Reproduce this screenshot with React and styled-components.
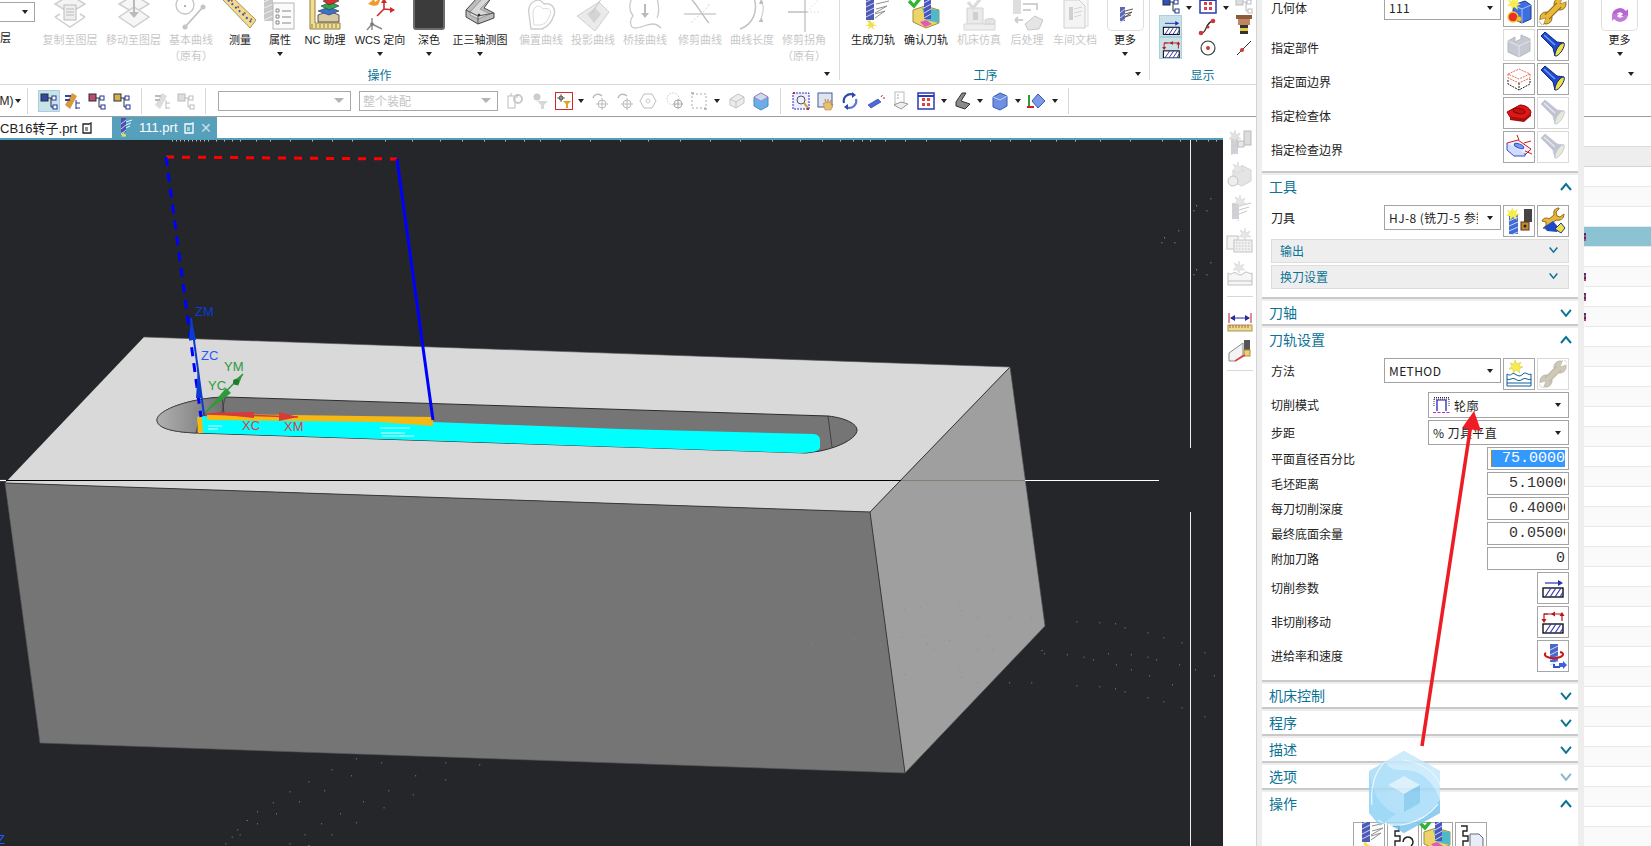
import styled, { createGlobalStyle } from 'styled-components';

const GlobalStyle = createGlobalStyle`
  html, body { margin: 0; padding: 0; width: 100%; height: 100%; overflow: hidden; background: #fff; }
  #root { width: 100%; height: 100%; }
  * { box-sizing: border-box; }
  body { font-family: "Liberation Sans", "Noto Sans CJK SC", sans-serif; font-size: 12px; color: #222; }
  svg { display: block; flex: none; }
`;

/* ---------- ribbon drawings ---------- */
const Ico = ({ w = 36, h = 32, children }) => (
  <svg width={w} height={h} viewBox={`0 0 ${w} ${h}`} fill="none">{children}</svg>
);
const G = '#cfcfcf';

const CopyLayer = () => (
  <Ico>
    <path d="M18-5 33 4 18 13 3 4Z" fill="#f3f3f3" stroke={G} strokeWidth="1.5" />
    <path d="M3 17 18 27 33 17M3 17l5-3M33 17l-5-3" stroke={G} strokeWidth="1.5" />
    <rect x="12" y="5" width="12" height="15" fill="#eee" stroke="#bbb" />
    <path d="M14 9h8M14 12h8M14 15h8" stroke="#bbb" />
  </Ico>
);
const MoveLayer = () => (
  <Ico>
    <path d="M18-5 33 4 18 13 3 4Z" fill="#f6f6f6" stroke={G} strokeWidth="1.5" />
    <path d="M3 17 18 27 33 17 18 7Z" fill="#f6f6f6" stroke={G} strokeWidth="1.5" />
    <path d="M18 0v14" stroke="#bbb" strokeWidth="2" />
    <path d="M13 12h10l-5 6Z" fill="#bbb" />
  </Ico>
);
const BasicCurve = () => (
  <Ico>
    <circle cx="12" cy="5" r="9" stroke="#c4c4c4" strokeWidth="1.3" />
    <circle cx="12" cy="6" r="1" fill="#999" />
    <path d="M12 27 30 7" stroke="#bdbdbd" strokeWidth="1.6" />
    <circle cx="12" cy="27" r="2.5" fill="#c4c4c4" />
    <circle cx="30" cy="7" r="2.5" fill="#c4c4c4" />
  </Ico>
);
const Measure = () => (
  <Ico>
    <path d="M7-6 34 20 28 28 1 0Z" fill="#f0dc8e" stroke="#a6975c" />
    <path d="M6 0 29 22" stroke="#3c52c0" strokeWidth="2" strokeDasharray="2 3" />
    <path d="M9 0 30 20" stroke="#d04040" strokeWidth="1.5" strokeDasharray="2 7" />
  </Ico>
);
const Props = () => (
  <Ico>
    <rect x="2" y="-3" width="9" height="24" fill="#c9c9c9" />
    <path d="M2 2l9-4M2 8l9-4M2 14l9-4M2 20l9-4" stroke="#eee" />
    <rect x="11" y="3" width="21" height="26" fill="#fbfbfb" stroke="#b5b5b5" />
    <path d="M14 9h3v3h-3zM14 15h3v3h-3zM14 21h3v3h-3z" stroke="#888" />
    <path d="M20 11h9M20 17h9M20 23h9" stroke="#888" />
  </Ico>
);
const NcHelper = () => (
  <Ico>
    <path d="M3-3H8V23H33V29H3Z" fill="#f3dd8f" stroke="#8e7e3e" />
    <path d="M5 24v4M9 24v4M13 24v4M17 24v4M21 24v4M25 24v4M29 24v4" stroke="#6f6a4a" strokeWidth=".8" />
    <path d="M11 22V15L22 11 32 15V22Z" fill="#d8c9a0" stroke="#555" />
    <path d="M11 11 22 7l10 4-10 4Z" fill="#3a70d8" stroke="#234" strokeWidth=".6" />
    <path d="M14 6 24 2l8 4-10 4Z" fill="#2fa84a" stroke="#234" strokeWidth=".6" />
    <path d="M16 1 26-3l6 4-10 4Z" fill="#d83030" stroke="#234" strokeWidth=".6" />
  </Ico>
);
const WcsOrient = () => (
  <Ico>
    <path d="M10 30V18M10 24l-5 6M10 24l10 5" stroke="#8a8a8a" strokeWidth="1.4" />
    <circle cx="10" cy="24" r="1.8" fill="#777" />
    <path d="M22 9V-2M22 9l10 1M22 9l-7 7" stroke="#d02c2c" strokeWidth="1.6" />
    <path d="M22-2l-3 5h6Z M33 10l-5-3v6Z" fill="#d02c2c" />
    <path d="M6 4 12-1l1 3 6-4-3 7-4 1Z" fill="#f09a2a" />
  </Ico>
);
const DarkMode = () => (
  <Ico>
    <rect x="3" y="-4" width="30" height="33" rx="2" fill="#3b3b3b" stroke="#6c6c6c" strokeWidth="2" />
  </Ico>
);
const Trimetric = () => (
  <Ico>
    <path d="M4 10 16-3H30L22 8 32 13V18L16 24 4 17Z" fill="#bcbcbc" stroke="#444" />
    <path d="M8 12 20-1H28L18 9 28 14 16 19 8 15Z" fill="#d8d8d8" stroke="#777" strokeWidth=".6" />
    <path d="M4 10 16 16 32 13M16 16V24" stroke="#555" />
    <circle cx="17" cy="15" r="1.300" fill="#333" />
  </Ico>
);
const OffsetCurve = () => (
  <Ico>
    <path d="M6 14C4 2 16-4 21 4 29 2 33 9 31 15 29 22 24 27 19 29H8Z" stroke="#cdcdcd" strokeWidth="1.4" />
    <path d="M10 15C9 7 16 3 20 9 26 7 29 11 27 15 25 20 22 24 18 25H11Z" stroke="#dadada" />
  </Ico>
);
const ProjectCurve = () => (
  <Ico>
    <path d="M2 16 24 2l10 10-14 19Z" fill="#eaeaea" stroke="#d0d0d0" />
    <path d="M12 14l8-6 6 6-7 9Z" fill="#d4d4d4" />
    <path d="M22-2h12" stroke="#bbb" strokeWidth="3" />
    <path d="M27-2 16 14" stroke="#c4c4c4" />
  </Ico>
);
const BridgeCurve = () => (
  <Ico>
    <path d="M5-2C1 6 3 12 6 16 2 20 3 28 8 28 14 28 20 24 26 24 30 24 33 27 34 28M30-2C32 6 33 12 30 18" stroke="#c9c9c9" strokeWidth="1.3" />
    <path d="M18 4v10" stroke="#bbb" strokeWidth="2" />
    <path d="M14 13h8l-4 5Z" fill="#bbb" />
  </Ico>
);
const TrimCurve = () => (
  <Ico>
    <path d="M2 14H34" stroke="#c4c4c4" strokeWidth="1.3" />
    <path d="M10 0C16 6 22 18 27 23" stroke="#bbb" strokeWidth="1.3" />
    <path d="M27 4C22 14 14 16 8 24" stroke="#d4d4d4" strokeDasharray="2 2" />
  </Ico>
);
const CurveLength = () => (
  <Ico>
    <path d="M20-2C24 10 20 24 6 29" stroke="#c4c4c4" strokeWidth="1.5" />
    <path d="M27-2C31 8 29 16 25 22" stroke="#c4c4c4" />
    <path d="M27-1l-2 5h4ZM25 22l3-4 1 4Z" fill="#bbb" />
  </Ico>
);
const TrimCorner = () => (
  <Ico>
    <path d="M2 12H21M19 0V32" stroke="#bfbfbf" strokeWidth="1.3" />
    <path d="M21 12H34M21 12 32 0" stroke="#d8d8d8" strokeDasharray="1.5 2" />
  </Ico>
);
const Cutter = ({ x = 12, y = -4, w = 8, h = 24, c = '#4f5ab4' }) => (
  <g>
    <rect x={x} y={y} width={w} height={h} fill={c} />
    <path d={`M${x} ${y + 6}l${w} -4M${x} ${y + 11}l${w} -4M${x} ${y + 16}l${w} -4M${x} ${y + 21}l${w} -4`} stroke="#cfd4f2" strokeWidth="1" />
  </g>
);
const GenPath = () => (
  <Ico>
    <Cutter x={11} y={-4} />
    <path d="M21 4 34 1M21 9 32 6 20 13M20 14 30 11 20 18" stroke="#8f8f8f" strokeWidth="1" />
    <path d="M15 20l2 3 3-2-2 3 4 2-4 0 1 4-3-3-3 3 1-4-4 0 4-2-2-3Z" fill="#f1e04c" />
  </Ico>
);
const VerifyPath = () => (
  <Ico>
    <path d="M5 22V10L17 6l14 4v13l-13 5Z" fill="#ecd36a" stroke="#a38f3e" />
    <path d="M14 8 31 10v13L18 20Z" fill="#4fb9c8" />
    <path d="M12 22 18 20 24 24 17 27Z" fill="#e05cb0" />
    <Cutter x={16} y={-3} w={7} h={22} c="#4757bf" />
    <path d="M1 1 6 6 14-4" stroke="#2fb52f" strokeWidth="3.4" />
  </Ico>
);
const MachineSim = () => (
  <Ico>
    <path d="M6 8H22V24H6Z" fill="#eaeaea" stroke="#d2d2d2" />
    <path d="M3 24H34V30H3Z" fill="#eee" stroke="#d8d8d8" />
    <path d="M24 20c4-2 8-2 10 0v4H24Z" fill="#e3e3e3" stroke="#d2d2d2" />
    <path d="M12 12h5v8h-5z" fill="#cfcfcf" />
    <path d="M7 2l5 6 9-11" stroke="#dcdcdc" strokeWidth="3.2" />
  </Ico>
);
const PostProc = () => (
  <Ico>
    <rect x="4" y="-4" width="8" height="18" fill="#dedede" />
    <path d="M14 4H28V10M14 10h8" stroke="#d0d0d0" strokeWidth="2" />
    <path d="M6 20H14M6 20l3-3M6 20l3 3" stroke="#cfcfcf" strokeWidth="2" />
    <path d="M16 24 26 16l8 4-4 9-11 1Z" fill="#e5e5e5" stroke="#c8c8c8" />
  </Ico>
);
const ShopDoc = () => (
  <Ico>
    <rect x="13" y="-4" width="18" height="30" fill="#f8f8f8" stroke="#dcdcdc" />
    <path d="M7 0H22L28 6V28H7Z" fill="#f4f4f4" stroke="#cfcfcf" />
    <rect x="12" y="7" width="4" height="13" fill="#d0d0d0" />
    <path d="M17 9 25 7M17 13 25 11M17 17 24 15" stroke="#d4d4d4" />
  </Ico>
);
const MoreTool = () => (
  <Ico w={18} h={18} >
    <Cutter x={4} y={1} w={5} h={14} c="#5b67b4" />
    <path d="M9 5 17 3M9 8 16 6 9 11M9 11 15 9" stroke="#555" />
  </Ico>
);
const MoreSpin = () => (
  <Ico w={22} h={20}>
    <path d="M3 10a8 8 0 0 1 14-4l2-2v7h-7l2-2a4 4 0 0 0-7 1Z" fill="#b866cf" />
    <path d="M19 10a8 8 0 0 1-14 4l-2 2V9h7l-2 2a4 4 0 0 0 7-1Z" fill="#c47ad8" />
  </Ico>
);

/* ---------- hatch and panel drawings ---------- */
const Hatch = ({ y = 12, w = 20 }) => (
  <g>
    <rect x="3" y={y} width={w} height="9" fill="#fff" stroke="#000" strokeWidth="1.3" />
    <path d={`M5 ${y + 9}l6-9M10 ${y + 9}l6-9M15 ${y + 9}l6-9M20 ${y + 9}l3-5`} stroke="#3236a8" strokeWidth="1.2" />
  </g>
);
const CutParams = ({ w = 26, h = 26 }) => (
  <Ico w={w} h={h}>
    <path d="M5 8H20" stroke="#2430b0" strokeWidth="1.2" />
    <path d="M23 8l-5-3v6Z" fill="#2430b0" />
    <Hatch y={13} />
  </Ico>
);
const NonCut = ({ w = 26, h = 26 }) => (
  <Ico w={w} h={h}>
    <path d="M4 12V5H22V12" stroke="#b8141c" strokeWidth="1.2" />
    <path d="M4 5h4" stroke="#b8141c" />
    <path d="M11 5l4-2.5v5ZM1.5 10h5L4 14ZM19.500 7h5L22 3Z" fill="#b8141c" />
    <Hatch y={15} />
  </Ico>
);
const GeomNew = () => (
  <Ico w={28} h={28}>
    <path d="M8 8 20 4l6 4v14l-9 4-9-4Z" fill="#3d6fe0" stroke="#1c3c90" />
    <path d="M8 8l9 4 9-4M17 12v14" stroke="#a8c4ff" />
    <circle cx="8" cy="20" r="5" fill="#e9302a" stroke="#f2c82e" strokeWidth="1.3" />
    <circle cx="14" cy="22" r="2.5" fill="#f2c82e" stroke="#c82" strokeWidth=".6" />
    <path d="M8 0l2 4 4-2-2 4 4 1-4 2 1 4-4-3-2 3-1-4-4 0 3-3-2-3 4 1Z" fill="#f5ec50" />
  </Ico>
);
const Wrench = ({ a = '#e9b83a', b = '#8a6b1a' }) => (
  <Ico w={28} h={28}>
    <circle cx="21" cy="7" r="6" fill={a} stroke={b} />
    <circle cx="7" cy="21" r="6" fill={a} stroke={b} />
    <path d="M8 20 20 8" stroke={b} strokeWidth="7" />
    <path d="M7 21 21 7" stroke={a} strokeWidth="5" />
    <path d="M21 7 24-1 30 4Z" fill="#fff" stroke={b} strokeWidth=".6" />
    <path d="M7 21-1 23 4 29Z" fill="#fff" stroke={b} strokeWidth=".6" />
  </Ico>
);
const ToolWrench = () => (
  <Ico w={28} h={28}>
    <path d="M20 1c-4 0-6 3-5 7L10 12c-2-2-6-1-7 2l4 1 0 4-3 2c3 2 7 0 7-3L17 13c4 1 8-1 8-6l-4 3-3-1-1-4 3-3Z" fill="#e9b83a" stroke="#8a6b1a" />
    <path d="M5 20 14 14l6 7-2 4-10-1Z" fill="#1e49c8" />
    <path d="M16 22l6-6 4 5-4 5Z" fill="#f0e040" stroke="#1e3a90" />
  </Ico>
);
const Block = () => (
  <Ico w={28} h={28}>
    <path d="M3 10 10 6v5l6-3v-4l9 4v12l-11 6-11-5Z" fill="#c6c9d2" stroke="#b4b7c0" />
    <path d="M3 10l11 5 11-5M14 15v11" stroke="#e2e4ea" />
  </Ico>
);
const Flash = ({ on = true }) => (
  <Ico w={28} h={28}>
    <path d="M2 5 6 1 18 11 25 12 16 25 14 17Z" fill={on ? '#1e49c8' : '#bfc3d2'} stroke={on ? '#0f2780' : '#c8cad6'} />
    <path d="M5 4 16 14" stroke={on ? '#6f9cff' : '#e6e8f0'} strokeWidth="1.5" />
    <path d="M25 12c2 3-5 14-9 13-1-4 5-14 9-13Z" fill={on ? '#f0e040' : '#e9e9d8'} stroke={on ? '#0f2780' : '#c8cad6'} />
  </Ico>
);
const WireBox = () => (
  <Ico w={28} h={28}>
    <path d="M3 9 14 4l11 5-11 5ZM3 9v4l11 5 11-5V9" stroke="#ef6a5a" strokeDasharray="2 1" />
    <path d="M3 15v4l11 6 11-6v-5M14 18v7" stroke="#222" strokeDasharray="2 1" />
  </Ico>
);
const RedBlock = () => (
  <Ico w={28} h={28}>
    <path d="M2 13 15 6c6 0 11 4 11 8l-7 6-14-2Z" fill="#e01616" stroke="#8a0808" />
    <ellipse cx="14" cy="12" rx="6" ry="2.5" transform="rotate(12 14 12)" stroke="#7a0606" fill="#c81010" />
    <path d="M5 18 19 20 26 14v3l-7 6-14-2Z" fill="#a80e0e" />
  </Ico>
);
const Boat = () => (
  <Ico w={28} h={28}>
    <path d="M2 10 13 7l13 9-6 6H9Z" fill="#eaf0ff" stroke="#d81818" />
    <ellipse cx="14" cy="13" rx="5" ry="2" transform="rotate(22 14 13)" fill="#7c98f0" stroke="#3050c0" />
    <path d="M2 10v7l7 6h11v-3" fill="#cfdcff" stroke="#3050c0" />
    <path d="M12 2l2 5M19 10l7-2M20 18l7 3" stroke="#d81818" />
  </Ico>
);
const ToolNew = () => (
  <Ico w={28} h={28}>
    <rect x="19" y="2" width="8" height="13" fill="#444" />
    <rect x="16" y="15" width="8" height="8" fill="#c98a22" stroke="#533" />
    <circle cx="20" cy="19" r="1.5" fill="#222" />
    <Cutter x={4} y={8} w={9} h={19} c="#3e6dd8" />
    <path d="M7 0l2 4 4-2-2 4 4 1-4 2 1 4-4-3-3 3 0-4-4 0 3-3-2-3 4 1Z" fill="#f5ec50" />
  </Ico>
);
const Waves = () => (
  <Ico w={28} h={28}>
    <path d="M2 14c4 3 5-2 8 0s5 3 8 0 5 2 8 0v12H2Z" fill="#fff" stroke="#0e5c9a" />
    <path d="M2 19c3 2 5-2 8 0s5 2 8 0 5 2 8 0M2 23h24" stroke="#0e5c9a" />
    <path d="M10 0l2 4 4-2-2 4 4 1-4 2 1 4-4-3-3 3 0-4-4 0 3-3-2-3 4 1Z" fill="#f5ec50" stroke="#c9b620" strokeWidth=".4" />
  </Ico>
);
const Feeds = () => (
  <Ico w={28} h={28}>
    <Cutter x={11} y={2} w={8} h={18} c="#4a68c8" />
    <path d="M7 11c-4 2 2 6 10 5s9-5 4-6" stroke="#c81818" strokeWidth="2" />
    <path d="M15 22v3h6" stroke="#3050d0" strokeWidth="2" />
    <path d="M20 21h4v-2l4 4-4 4v-2h-4Z" fill="#3f5fe0" />
  </Ico>
);
const Squiggle = ({ over }) => (
  <Ico w={28} h={28}>
    <path d="M4 2h6v5H6v5h5v5H6v5" stroke="#222" strokeWidth="1.4" />
    {over}
  </Ico>
);
const ProfileMode = () => (
  <svg width="17" height="18" viewBox="0 0 17 18" fill="none">
    <path d="M1 3H16M1 1.500h15M1 3v8M16 3v8" stroke="#333" strokeDasharray="1 1" />
    <path d="M4 15V4H13V15" stroke="#1414b8" strokeWidth="1.2" />
    <path d="M0 16.500H17" stroke="#d020d0" strokeDasharray="3 1.500" />
  </svg>
);

/* ---------- toolbar drawings ---------- */
const Tree = ({ c = '#3346a8', k = '#233', off }) => (
  <Ico w={20} h={20}>
    <rect x="2" y="3" width="7" height="7" fill={off ? '#ddd' : c} stroke={off ? '#bbb' : k} />
    <path d="M9 7h5M12 7v9h3" stroke={off ? '#bbb' : k} />
    <rect x="13" y="5" width="4" height="4" fill="#fff" stroke={off ? '#bbb' : '#23309a'} />
    <rect x="14" y="14" width="4" height="4" fill="#fff" stroke={off ? '#bbb' : '#23309a'} />
  </Ico>
);
const Asm = ({ off }) => (
  <Ico w={20} h={20}>
    <path d="M3 14 10 2l5 3-7 13Z" fill={off ? '#ddd' : '#d89a3a'} />
    <path d="M3 5h6M3 9h5" stroke={off ? '#bbb' : '#3346a8'} strokeWidth="2" />
    <path d="M14 9v9M14 12h4M14 17h4" stroke={off ? '#bbb' : '#23309a'} />
  </Ico>
);
const GreyGear = () => (
  <Ico w={20} h={20}>
    <rect x="3" y="5" width="7" height="12" stroke="#bdbdbd" />
    <circle cx="13" cy="8" r="4" stroke="#c9c9c9" strokeWidth="2" />
    <path d="M12 3v4M6 2v3" stroke="#bbb" />
  </Ico>
);
const GreyFilter = () => (
  <Ico w={20} h={20}>
    <circle cx="7" cy="6" r="3.500" fill="#ccc" />
    <path d="M7 10h11l-4 4v4h-3v-4Z" fill="#d8d8d8" />
  </Ico>
);
const SnapFilter = () => (
  <Ico w={20} h={20}>
    <rect x="1.500" y="1.500" width="17" height="17" stroke="#d8232a" />
    <circle cx="7" cy="7" r="2" stroke="#444" />
    <path d="M7 3v8M3 7h8" stroke="#444" strokeWidth=".7" />
    <path d="M9 10h8l-3 3v4h-2v-4Z" fill="#e8a020" />
  </Ico>
);
const GreyCross = () => (
  <Ico w={20} h={20}>
    <path d="M3 7c1-4 6-5 9-2" stroke="#bbb" strokeWidth="1.5" />
    <circle cx="12" cy="13" r="4" stroke="#bbb" />
    <path d="M12 7v12M6 13h12" stroke="#bbb" />
  </Ico>
);
const GreyHex = () => (
  <Ico w={20} h={20}>
    <path d="M6 3H14L18 10 14 17H6L2 10Z" stroke="#bdbdbd" />
    <circle cx="10" cy="10" r="2" stroke="#c9c9c9" />
  </Ico>
);
const GreyDots = () => (
  <Ico w={20} h={20}>
    <circle cx="8" cy="8" r="6" stroke="#c4c4c4" strokeDasharray="1.500 1.500" />
    <circle cx="13" cy="13" r="4" stroke="#aaa" />
    <path d="M13 8v10M8 13h10" stroke="#aaa" />
  </Ico>
);
const GreySel = () => (
  <Ico w={20} h={20}>
    <rect x="3" y="3" width="14" height="14" stroke="#aaa" strokeDasharray="2 2" />
    <path d="M2 2h3M15 18h3" stroke="#888" />
  </Ico>
);
const GreyCube = () => (
  <Ico w={20} h={20}>
    <path d="M3 8 11 3l6 3v6l-8 5-6-3Z" fill="#ececec" stroke="#c4c4c4" />
    <path d="M3 8l6 3 8-5M9 11v6" stroke="#c4c4c4" />
  </Ico>
);
const BlueCube = () => (
  <Ico w={20} h={20}>
    <path d="M3 6 10 2l7 4v9l-7 4-7-4Z" fill="#69aee8" stroke="#4e88c0" />
    <path d="M3 6l7 4 7-4-7-4Z" fill="#c6dcf4" stroke="#d85a8a" strokeWidth=".6" />
  </Ico>
);
const ZoomFit = () => (
  <Ico w={20} h={20}>
    <rect x="2" y="2" width="16" height="16" fill="#eef" stroke="#2a2ad8" strokeDasharray="2 1" />
    <circle cx="10" cy="9" r="4" stroke="#555" />
    <path d="M13 12l4 5" stroke="#c8a020" strokeWidth="2" />
    <path d="M2 2h2M16 18h2" stroke="#d82020" strokeWidth="2" />
  </Ico>
);
const PanHand = () => (
  <Ico w={20} h={20}>
    <rect x="2" y="2" width="14" height="14" fill="#dfe4f2" stroke="#4a5a9a" />
    <path d="M9 19l-2-7 2 1 0-5 2 4 1-4 1 4 2-3 0 5 2-1-2 6Z" fill="#e8c070" stroke="#a87c2a" strokeWidth=".5" />
  </Ico>
);
const Orbit = () => (
  <Ico w={20} h={20}>
    <path d="M4 12A7 7 0 0 1 13 3.500" stroke="#2a4aa8" strokeWidth="2.200" />
    <path d="M16 8A7 7 0 0 1 7 16.500" stroke="#5a78d0" strokeWidth="2.200" />
    <path d="M12 1l4 3-4 3ZM8 13l-4 3 4 3Z" fill="#2a4aa8" />
  </Ico>
);
const Prism = () => (
  <Ico w={20} h={20}>
    <path d="M2 14 12 8l3 3-10 6Z" fill="#4a6ad8" stroke="#2a3a90" strokeWidth=".6" />
    <path d="M15 6l1.500-2M17 7h2" stroke="#d02020" />
  </Ico>
);
const Layout2 = () => (
  <Ico w={20} h={20}>
    <rect x="4" y="1" width="9" height="12" fill="#fff" stroke="#bbb" />
    <path d="M6 4h2M6 7h2" stroke="#aaa" />
    <path d="M3 14l7-3 7 2-7 5Z" fill="#eee" stroke="#999" />
  </Ico>
);
const Views = () => (
  <Ico w={20} h={20}>
    <rect x="2" y="2" width="16" height="16" fill="#fff" stroke="#2a3ab0" strokeWidth="1.5" />
    <path d="M2 5h16" stroke="#2a3ab0" strokeWidth="2" />
    <path d="M6 7h3v3H6zM11 7h3v3h-3zM6 12h3v3H6zM11 12h3v3h-3z" fill="#e04040" />
  </Ico>
);
const Shade = () => (
  <Ico w={20} h={20}>
    <path d="M3 11 9 2h4L8 10l9 3-5 5-9-3Z" fill="#8a8a8a" stroke="#333" />
  </Ico>
);
const Shade2 = () => (
  <Ico w={20} h={20}>
    <path d="M3 6 10 2l7 3v10l-7 4-7-3Z" fill="#6f8fe0" stroke="#3a5ab0" />
    <path d="M3 6l7 3 7-4" stroke="#c4d4ff" />
  </Ico>
);
const Diamond = () => (
  <Ico w={20} h={20}>
    <path d="M3 4v12" stroke="#2aa02a" strokeWidth="2" />
    <path d="M1 16h7" stroke="#d02020" strokeWidth="2" />
    <path d="M6 10l6-7 7 7-7 7Z" fill="#7d9ae8" stroke="#3a5ab0" />
  </Ico>
);
const DocIcon = ({ c = '#222' }) => (
  <svg width="10" height="12" viewBox="0 0 10 12" fill="none">
    <path d="M1 2h6l2-1v10H1Z" stroke={c} strokeWidth="1.300" />
    <path d="M3 6h3M3 8h3" stroke={c} />
  </svg>
);

/* ---------- side strip drawings ---------- */
const StripTool = () => (
  <Ico w={26} h={26}>
    <Cutter x={4} y={10} w={7} h={15} c="#cfcfcf" />
    <rect x="17" y="2" width="7" height="14" fill="#dcdcdc" stroke="#bbb" />
    <path d="M11 12h6v6h-6z" fill="#e8e8e8" stroke="#bbb" />
    <path d="M8 1l1 5 4-2-2 4 3 2-5 0-1 3-2-3-4 0 3-3-2-4 4 2Z" fill="#e2e2e2" stroke="#ccc" strokeWidth=".5" />
  </Ico>
);
const StripBlock = () => (
  <Ico w={26} h={26}>
    <path d="M6 9 16 4l8 4v11l-9 5-9-4Z" fill="#e4e4e4" stroke="#d4d4d4" />
    <circle cx="6" cy="19" r="5" fill="#eee" stroke="#c4c4c4" />
    <path d="M11 0l1 5 4-2-2 4 3 2-5 0-1 3-2-3-4 0 3-3-2-4 4 2Z" fill="#e6e6e6" stroke="#d0d0d0" strokeWidth=".5" />
  </Ico>
);
const StripGen = () => (
  <Ico w={26} h={26}>
    <Cutter x={5} y={8} w={7} h={16} c="#d0d0d0" />
    <path d="M12 11 24 8M12 15 22 12M12 19 20 16" stroke="#c8c8c8" />
    <path d="M13 0l1 5 4-2-2 4 3 2-5 0-1 3-2-3-4 0 3-3-2-4 4 2Z" fill="#e6e6e6" stroke="#d0d0d0" strokeWidth=".5" />
  </Ico>
);
const StripGrid = () => (
  <Ico w={28} h={26}>
    <rect x="1" y="8" width="11" height="13" fill="#f4f4f4" stroke="#c4c4c4" />
    <rect x="8" y="12" width="18" height="12" fill="#f0f0f0" stroke="#c4c4c4" />
    <path d="M10 15h14M10 18h14M10 21h14" stroke="#c4c4c4" strokeDasharray="1.500 1.500" />
    <path d="M19 0l1 5 4-2-2 4 3 2-5 0-1 3-2-3-4 0 3-3-2-4 4 2Z" fill="#e6e6e6" stroke="#d0d0d0" strokeWidth=".5" />
  </Ico>
);
const StripWaves = () => (
  <Ico w={28} h={26}>
    <path d="M2 12c4 3 5-2 8 0s5 3 8 0 5 2 8 0v12H2Z" fill="#f6f6f6" stroke="#c0c0c0" />
    <path d="M2 20h24" stroke="#c0c0c0" />
    <path d="M13 0l1 5 4-2-2 4 3 2-5 0-1 3-2-3-4 0 3-3-2-4 4 2Z" fill="#e6e6e6" stroke="#d0d0d0" strokeWidth=".5" />
  </Ico>
);
const StripRuler = () => (
  <Ico w={26} h={22}>
    <path d="M2 2v10M24 2v10" stroke="#c81818" />
    <path d="M4 7H22" stroke="#2a2a9a" />
    <path d="M3 7l5-3v6ZM23 7l-5-3v6Z" fill="#2a2a9a" />
    <rect x="1" y="14" width="24" height="6" fill="#ecd98c" stroke="#a89860" />
    <path d="M3 14v3M6 14v3M9 14v3M12 14v3M15 14v3M18 14v3M21 14v3" stroke="#a03030" strokeWidth=".7" />
  </Ico>
);
const StripWedge = () => (
  <Ico w={26} h={24}>
    <path d="M2 14 16 4V16L8 22H2Z" fill="#f3f3f3" stroke="#8a8a8a" />
    <rect x="17" y="1" width="6" height="11" fill="#555" />
    <rect x="17" y="11" width="6" height="6" fill="#ecd070" stroke="#a89040" />
    <path d="M8 22 18 16" stroke="#e04040" strokeWidth="1.500" />
  </Ico>
);

/* ---------- display group drawings ---------- */
const SCurve = () => (
  <Ico w={24} h={22}>
    <path d="M5 18C11 19 9 7 17 6" stroke="#222" strokeWidth="1.300" />
    <circle cx="5" cy="18" r="2.300" fill="#d03838" />
    <circle cx="12" cy="12" r="1.500" fill="#d03838" />
    <circle cx="17" cy="6" r="2.300" fill="#d03838" />
  </Ico>
);
const Flange = () => (
  <Ico w={24} h={22}>
    <rect x="4" y="0" width="16" height="4" fill="#8a5a3a" />
    <rect x="6" y="4" width="12" height="6" fill="#c08560" />
    <rect x="8" y="10" width="8" height="3" fill="#333" />
    <rect x="8" y="13" width="8" height="3" fill="#e8c840" />
    <rect x="8" y="16" width="8" height="3" fill="#333" />
  </Ico>
);
const CircleDot = () => (
  <Ico w={24} h={22}>
    <circle cx="12" cy="11" r="7" stroke="#333" strokeWidth="1.100" />
    <circle cx="12" cy="11" r="2" fill="#d03838" />
  </Ico>
);
const Segment = () => (
  <Ico w={24} h={22}>
    <path d="M5 18 19 4" stroke="#333" />
    <circle cx="10" cy="13" r="2" fill="#d03838" />
  </Ico>
);

/* ---------- page parts ---------- */
const Page = styled.div`
  width: 1651px;
  height: 846px;
  position: relative;
  overflow: hidden;
  display: flex;
  flex-direction: column;
  background: #fff;
`;
const Ribbon = styled.div`
  height: 85px;
  flex: none;
  display: flex;
  border-bottom: 1px solid #dadada;
  overflow: hidden;
`;
const Group = styled.div`
  flex: none;
  display: flex;
  flex-direction: column;
  width: ${p => p.$w}px;
  margin-left: ${p => p.$ml || 0}px;
`;
const GroupBody = styled.div`
  height: 66px;
  flex: none;
  display: flex;
  padding-left: ${p => p.$pl || 0}px;
`;
const GroupFoot = styled.div`
  height: 18px;
  position: relative;
  text-align: center;
  line-height: 18px;
  font-size: 12px;
  color: #0a7396;
  font-family: "Noto Sans CJK SC", sans-serif;
  padding-right: ${p => p.$pr || 0}px;
`;
const FootCaret = styled.span`
  position: absolute;
  right: ${p => p.$r}px;
  top: 6px;
  border-left: 3.5px solid transparent;
  border-right: 3.5px solid transparent;
  border-top: 4px solid #222;
`;
const Divider = styled.div`
  width: 1px;
  height: 80px;
  flex: none;
  background: #dcdcdc;
`;
const RibbonItem = styled.div`
  flex: none;
  width: ${p => p.$w}px;
  display: flex;
  flex-direction: column;
  align-items: center;
`;
const IconSlot = styled.div`
  height: 32px;
  display: flex;
  align-items: flex-start;
  justify-content: center;
  overflow: hidden;
`;
const ItemLabel = styled.div`
  line-height: 16px;
  font-size: 11px;
  white-space: nowrap;
  font-family: "Liberation Sans", "Noto Sans CJK SC", sans-serif;
  color: ${p => (p.$off ? '#c8c8c8' : '#222')};
`;
const Caret = styled.span`
  display: block;
  flex: none;
  width: 0;
  height: 0;
  border-left: 3.5px solid transparent;
  border-right: 3.5px solid transparent;
  border-top: 4px solid #222;
  margin-top: ${p => p.$mt || 0}px;
`;
const HeadSelect = styled.div`
  width: 40px;
  height: 20px;
  margin: 2px 0 8px -7px;
  border: 1px solid #a5a5a5;
  display: flex;
  align-items: center;
  justify-content: flex-end;
  padding-right: 6px;
`;
const LeadLabel = styled(ItemLabel)`
  padding-left: 0;
  align-self: flex-start;
`;
const MoreBox = styled.div`
  width: 37px;
  height: 31px;
  margin-bottom: 1px;
  border: 1px solid #dedede;
  border-top: none;
  border-radius: 0 0 5px 5px;
  display: flex;
  align-items: center;
  justify-content: center;
`;
const DisplayGrid = styled.div`
  display: grid;
  grid-template-columns: 23px 14px 24px 12px 24px;
  grid-template-rows: 15px 22px 22px;
  margin-left: 9px;
  justify-items: center;
  align-items: center;
`;
const ToggleCell = styled.div`
  width: 23px;
  height: 22px;
  background: #c9e2ea;
  border: 1px solid #a9d0dc;
  display: flex;
  align-items: center;
  justify-content: center;
  svg { width: 19px; height: 19px; }
`;
const ClipCell = styled.div`
  height: 15px;
  overflow: hidden;
  display: flex;
  align-items: flex-end;
`;
const Toolbar = styled.div`
  height: 32px;
  flex: none;
  display: flex;
  align-items: center;
  border-bottom: 1px solid #9c9c9c;
  overflow: hidden;
`;
const ToolCell = styled.div`
  flex: none;
  width: ${p => p.$w}px;
  height: 22px;
  margin-left: ${p => p.$ml || 0}px;
  display: flex;
  align-items: center;
  justify-content: center;
  background: ${p => (p.$on ? '#c9e2ea' : 'transparent')};
  box-shadow: ${p => (p.$on ? 'inset 0 0 0 1px #a9d0dc' : 'none')};
`;
const ToolText = styled.span`
  font-size: 12px;
  color: #222;
  white-space: nowrap;
`;
const ToolSep = styled.span`
  width: 1px;
  height: 26px;
  background: #d8d8d8;
`;
const ToolSelect = styled.div`
  flex: none;
  width: ${p => p.$w}px;
  height: 20px;
  margin-left: ${p => p.$ml}px;
  border: 1px solid #a8a8a8;
  display: flex;
  align-items: center;
  justify-content: space-between;
  padding: 0 6px 0 3px;
  font-size: 12px;
  font-family: "Noto Sans CJK SC", sans-serif;
  color: #c4c4c4;
`;
const GreyCaret = styled(Caret)`
  border-left-width: 5px;
  border-right-width: 5px;
  border-top: 5px solid #b4b4b4;
`;
const Main = styled.div`
  flex: 1;
  min-height: 0;
  display: flex;
`;
const Work = styled.div`
  width: 1223px;
  flex: none;
  display: flex;
  flex-direction: column;
`;
const Tabs = styled.div`
  height: 23px;
  flex: none;
  display: flex;
  border-bottom: 2px solid #4f9fbb;
`;
const Tab = styled.div`
  width: ${p => p.$w}px;
  display: flex;
  align-items: center;
  gap: ${p => p.$gap}px;
  padding-left: ${p => p.$pl}px;
  font-size: 13px;
  white-space: nowrap;
  font-family: "Liberation Sans", "Noto Sans CJK SC", sans-serif;
  color: ${p => (p.$active ? '#fff' : '#222')};
  background: ${p => (p.$active ? '#56a0bc' : '#fff')};
`;
const TabClose = styled.span`
  font-size: 14px;
  line-height: 1;
  color: #c9dfe7;
`;
const Viewport = styled.div`
  flex: 1;
  min-height: 0;
  background: #24262a;
`;
const Strip = styled.div`
  width: 33px;
  flex: none;
  display: flex;
  flex-direction: column;
  align-items: center;
  padding-top: 8px;
  background: #fff;
`;
const StripCell = styled.div`
  height: ${p => p.$h}px;
  flex: none;
  margin-top: ${p => p.$mt || 0}px;
  display: flex;
  align-items: center;
  justify-content: center;
`;
const StripSep = styled.div`
  width: 26px;
  height: 1px;
  flex: none;
  margin-top: ${p => p.$mt}px;
  background: #d8d8d8;
`;
const ListPane = styled.div`
  margin-left: 328px;
  width: 67px;
  flex: none;
  padding-top: 29px;
  display: flex;
  flex-direction: column;
`;
const ListHead = styled.div`
  height: 21px;
  flex: none;
  background: #eeeeee;
  border-top: 1px solid #dcdcdc;
  border-bottom: 1px solid #d4d4d4;
`;
const ListRow = styled.div`
  height: 20px;
  flex: none;
  border-bottom: 1px solid #e9e9e9;
  display: flex;
  align-items: center;
  background: ${p => (p.$sel ? '#8cc3d3' : p.$alt ? '#fafafa' : '#fff')};
`;
const ListMark = styled.span`
  width: 2px;
  height: 8px;
  background: repeating-linear-gradient(#2a3a90 0 2px, #c84040 2px 4px);
`;

/* floating operation dialog */
const Dialog = styled.div`
  position: absolute;
  left: 1256px;
  top: -5px;
  width: 328px;
  height: 860px;
  overflow: hidden;
  padding: 0 6px 0 5px;
  background: #eeeeee;
  border-left: 1px solid #d4d4d4;
  font-family: "Noto Sans CJK SC", "Liberation Sans", sans-serif;
`;
const Section = styled.div`
  background: #fff;
  border-bottom: 2px solid #c9c9c9;
  margin-bottom: 2px;
  padding: ${p => (p.$collapsed ? '0 9px' : '0 9px 6px')};
  height: ${p => (p.$collapsed ? '25px' : 'auto')};
  overflow: hidden;
`;
const SectionHead = styled.div`
  height: 25px;
  margin: 0 -9px ${p => (p.$collapsed ? 0 : 5)}px;
  padding: 0 5px 2px 7px;
  display: flex;
  align-items: center;
  justify-content: space-between;
  font-size: 14px;
  line-height: 23px;
  color: #0a7396;
`;
const Row = styled.div`
  display: flex;
  justify-content: space-between;
  align-items: flex-start;
  height: ${p => p.$h || 32}px;
  margin-bottom: 2px;
`;
const Label = styled.span`
  font-size: 12px;
  line-height: ${p => p.$lh || 32}px;
  color: #222;
  white-space: nowrap;
`;
const Controls = styled.div`
  display: flex;
  gap: 2px;
  align-items: flex-start;
`;
const PanelSelect = styled.div`
  width: ${p => p.$w}px;
  height: ${p => p.$h || 25}px;
  border: 1px solid #a3a3a3;
  display: flex;
  align-items: center;
  gap: 4px;
  padding: 0 7px 0 4px;
  font-size: 12px;
  letter-spacing: .4px;
  color: #222;
  background: #fff;
`;
const SelectText = styled.span`
  flex: 1;
  min-width: 0;
  margin-right: 5px;
  overflow: hidden;
  white-space: nowrap;
`;
const IconButton = styled.div`
  width: 32px;
  height: 32px;
  border: 1px solid ${p => (p.$off ? '#d9d9d9' : '#a6a6a6')};
  display: flex;
  align-items: center;
  justify-content: center;
  background: #fff;
`;
const ValueBox = styled.div`
  width: 82px;
  height: 23px;
  border: 1px solid #a3a3a3;
  padding: 2px 3px;
  display: flex;
  justify-content: flex-end;
  overflow: hidden;
`;
const ValueText = styled.span`
  font-family: "Liberation Mono", monospace;
  font-size: 15px;
  line-height: 17px;
  white-space: nowrap;
  flex: none;
  width: ${p => (p.$wide ? '74px' : p.$cut ? '56px' : 'auto')};
  padding-left: ${p => (p.$wide ? 10 : 0)}px;
  overflow: hidden;
  color: ${p => (p.$sel ? '#fff' : '#333')};
  background: ${p => (p.$sel ? '#3399ff' : 'transparent')};
  border-left: ${p => (p.$sel ? '1px solid #c87a20' : 'none')};
`;
const SubBar = styled.div`
  height: 24px;
  margin-bottom: 2px;
  padding: 0 9px 2px 8px;
  border: 1px solid #dcdcdc;
  background: #eeeeee;
  display: flex;
  align-items: center;
  justify-content: space-between;
  font-size: 12px;
  color: #0a7396;
`;
const ActionRow = styled.div`
  display: flex;
  justify-content: center;
  gap: 2px;
`;

/* annotation and watermark lying over the shot */
const Overlay = styled.svg`
  position: absolute;
  left: 0;
  top: 0;
  pointer-events: none;
`;

const Chevron = ({ s = 14, c = '#0a7396', o = 1 }) => (
  <svg width={s} height={s * 0.7} viewBox="0 0 14 10" fill="none" opacity={o}>
    <path d="M2 2l5 6 5-6" stroke={c} strokeWidth="2" />
  </svg>
);
const ChevronUp = () => (
  <svg width="14" height="10" viewBox="0 0 14 10" fill="none">
    <path d="M2 8l5-6 5 6" stroke="#0a7396" strokeWidth="2" />
  </svg>
);

const opsItems = [
  { w: 66, t: '复制至图层', I: CopyLayer, off: 1 },
  { w: 61, t: '移动至图层', I: MoveLayer, off: 1 },
  { w: 54, t: '基本曲线', t2: '（原有）', I: BasicCurve, off: 1 },
  { w: 44, t: '测量', I: Measure },
  { w: 36, t: '属性', I: Props, caret: 1 },
  { w: 54, t: 'NC 助理', I: NcHelper },
  { w: 56, t: 'WCS 定向', I: WcsOrient, caret: 1 },
  { w: 42, t: '深色', I: DarkMode, caret: 1 },
  { w: 60, t: '正三轴测图', I: Trimetric, caret: 1 },
  { w: 62, t: '偏置曲线', I: OffsetCurve, off: 1 },
  { w: 42, t: '投影曲线', I: ProjectCurve, off: 1 },
  { w: 62, t: '桥接曲线', I: BridgeCurve, off: 1 },
  { w: 48, t: '修剪曲线', I: TrimCurve, off: 1 },
  { w: 56, t: '曲线长度', I: CurveLength, off: 1 },
  { w: 48, t: '修剪拐角', t2: '（原有）', I: TrimCorner, off: 1 },
];
const pathItems = [
  { w: 54, t: '生成刀轨', I: GenPath },
  { w: 52, t: '确认刀轨', I: VerifyPath },
  { w: 54, t: '机床仿真', I: MachineSim, off: 1 },
  { w: 42, t: '后处理', I: PostProc, off: 1 },
  { w: 54, t: '车间文档', I: ShopDoc, off: 1 },
];

const RibbonTool = ({ w, t, t2, I, off, caret }) => (
  <RibbonItem $w={w}>
    <IconSlot><I /></IconSlot>
    <ItemLabel $off={off}>{t}</ItemLabel>
    {t2 && <ItemLabel $off={off}>{t2}</ItemLabel>}
    {caret && <Caret $mt={4} />}
  </RibbonItem>
);

const toolCells = [
  [24, GreyGear], [26, GreyFilter], [22, SnapFilter], [12, 'caret'], [26, GreyCross], [24, GreyCross],
  [22, GreyHex], [32, GreyDots], [16, GreySel], [20, 'caret'], [20, GreyCube], [28, BlueCube], [10, 'sep'],
  [32, ZoomFit], [18, PanHand], [30, Orbit], [22, Prism], [28, Layout2], [22, Views], [14, 'caret'],
  [24, Shade], [10, 'caret'], [30, Shade2], [6, 'caret'], [30, Diamond], [8, 'caret'], [18, 'sep'],
];

const listRows = Array.from({ length: 34 }, (_, i) => i);
const markedRows = [3, 5, 6, 7];

const floorDots = [[450,925],[482,937],[563,937],[606,943],[419,958],[444,976],[525,976],[563,988],[390,994],[366,1024],[410,1021],[491,1021],[522,1033],[345,1057],[378,1054],[459,1054],[485,1072],[325,1084],[349,1090],[430,1090],[312,1110],[325,1120],[406,1120],[450,1117],[300,1138],[303,1153],[385,1153],[419,1153],[293,1160],[285,1180],[366,1180],[390,1185],[1361,514],[1390,517],[1410,520],[1422,532],[1451,547],[1471,562],[1494,577],[1523,607],[1317,600],[1320,610],[1349,613],[1370,620],[1382,628],[1401,610],[1430,613],[1451,620],[1462,628],[1411,643],[1491,643],[1430,658],[1511,658],[1453,676],[1535,676],[1276,697],[1304,697],[1361,706],[1390,709],[1410,715],[1422,724],[1482,703],[1451,742],[1471,754],[1494,772],[1523,799],[1143,478],[1163,471],[1190,463],[1213,458],[1215,480],[1216,497],[1235,502],[1276,502],[1304,502],[1140,560],[1170,555],[1172,580],[1200,570],[1250,555],[1255,597],[1235,598],[1180,597],[1143,672],[1163,664],[1190,655],[1213,650],[1215,680],[1235,697],[1027,583],[1079,565],[1113,583]]
  .map(([x, y]) => [x / 1.2645, 450 + y / 3]);
const upperDots = [[1493,175],[1457,196],[1450,211],[1483,211],[1412,271],[1376,292],[1369,307],[1402,307],[1493,367],[1457,388],[1450,403],[1483,403]]
  .map(([x, y]) => [620 + x / 2.529, 140 + y / 3]);
const topTicks = [172,176,180,184,188,192,196,200,204,208,216,224,232,240,256,270,290,312,332,352,385,412,440,462,484,505,524,540,560,590,620,648,680,710,740,772,800,822,840,853,862,870,885,905,926,960,990,1010,1030,1056,1075,1100,1130,1162,1180,1196,1208,1216];

const Scene = () => (
  <svg width="1223" height="706" viewBox="0 140 1223 706" fill="none">
    <defs>
      <linearGradient id="slotEnd" x1="0" y1="0" x2="1" y2="0">
        <stop offset="0" stopColor="#b0b0b0" />
        <stop offset="1" stopColor="#6f6f6f" />
      </linearGradient>
    </defs>
    {topTicks.map(x => <rect key={x} x={x} y={140} width="1" height="1.500" fill="#b8b8b8" />)}
    {upperDots.map(([x, y]) => <rect key={`${x}-${y}`} x={x} y={y} width="1" height="1" fill="#a8a8a8" />)}
    {/* block faces */}
    <path d="M144 337 1010 367 870 512 5 483Z" fill="#d9d9d9" />
    <path d="M5 483 870 512 905 773 40 743Z" fill="#757575" />
    <path d="M1010 367 1045 626 905 773 870 512Z" fill="#9f9f9f" />
    <path d="M5 483 870 512M870 512 905 773M870 512 1010 367" stroke="#3a3a3a" strokeWidth="1" />
    <path d="M144 337 1010 367M1010 367 1045 626 905 773 40 743 5 483" stroke="#555" strokeWidth=".6" />
    {/* pocket */}
    <path d="M225 397 828 416C846 418 857 424 857 430 857 438 840 447 820 451L806 453 196 433C172 432 157 428 157 420 157 410 190 398 225 397Z" fill="#757575" stroke="#2c2c2c" strokeWidth="1" />
    <path d="M225 397C190 398 157 410 157 420 157 428 172 432 196 433L200 416 222 413Z" fill="url(#slotEnd)" stroke="#2c2c2c" strokeWidth=".6" />
    <path d="M828 416 832 447M222 398 224 413" stroke="#333" strokeWidth=".8" />
    {/* toolpath */}
    <path d="M198 416 433 422 620 429 814 434Q820 435 820 440V447Q820 451 812 452 806 453 800 453L620 447 202 433Z" fill="#00ffff" />
    <path d="M207 414 433 417V426L378 422 207 420Z" fill="#f6b913" />
    <path d="M197 417H202L203 433H198Z" fill="#f6b913" />
    <path d="M208 426h14M208 429h10M380 428h30M381 433h24M382 436h32" stroke="#e8fbff" strokeWidth="1" />
    <path d="M166 157 397 159" stroke="#ff0000" strokeWidth="3" strokeDasharray="8 8" />
    <path d="M166 157 201 417" stroke="#0000ff" strokeWidth="3" strokeDasharray="9 7" />
    <path d="M397 159 433 420" stroke="#0000ff" strokeWidth="3" />
    {/* csys */}
    <path d="M191 318 204 415" stroke="#0a3cd0" strokeWidth="2" />
    <path d="M191 318 196 340 189 340Z M198 368 202 398 196 398Z" fill="#0a3cd0" />
    <path d="M205 413 243 374" stroke="#2f9a3a" strokeWidth="1.500" />
    <path d="M205 413 226 388 231 393Z M243 374 233 381 238 386Z" fill="#2f9a3a" />
    <circle cx="236" cy="382" r="3" fill="#1f7a2a" />
    <path d="M205 414 298 417" stroke="#d83a3a" strokeWidth="1.500" />
    <path d="M205 413 254 412 254 418Z M298 417 279 412 279 421Z" fill="#d83a3a" />
    <g fontFamily="Liberation Sans, sans-serif" fontSize="13">
      <text x="195" y="316" fill="#0a3cd0">ZM</text>
      <text x="201" y="360" fill="#1f5cff">ZC</text>
      <text x="224" y="371" fill="#2f9a3a">YM</text>
      <text x="208" y="390" fill="#2f9a3a">YC</text>
      <text x="242" y="430" fill="#e43c3c">XC</text>
      <text x="284" y="431" fill="#e43c3c">XM</text>
      <text x="-3" y="844" fill="#1f5cff">Z</text>
    </g>
    {/* screen guides */}
    <path d="M0 480.500H901" stroke="#000" strokeWidth="1.200" />
    <path d="M0 480.500H6" stroke="#fff" strokeWidth="1.200" />
    <path d="M901 480.500H1025" stroke="#7f7f74" strokeWidth="1.200" />
    <path d="M1025 480.500H1159" stroke="#fff" strokeWidth="1.200" />
    <path d="M1190.500 140V448M1190.500 512V846" stroke="#ededed" strokeWidth="1" />
    {floorDots.map(([x, y]) => <rect key={`${x}-${y}`} x={x} y={y} width="1" height="1" fill="#8c8c8c" />)}
  </svg>
);

export default function App() {
  return (
    <Page>
      <GlobalStyle />
      <Ribbon>
        <Group $w={919} $ml={-80}>
          <GroupBody $pl={80}>
            <RibbonItem $w={37}>
              <HeadSelect><Caret /></HeadSelect>
              <LeadLabel>层</LeadLabel>
            </RibbonItem>
            {opsItems.map(item => <RibbonTool key={item.t} {...item} />)}
          </GroupBody>
          <GroupFoot>操作<FootCaret $r={9} /></GroupFoot>
        </Group>
        <Divider />
        <Group $w={309}>
          <GroupBody $pl={6}>
            {pathItems.map(item => <RibbonTool key={item.t} {...item} />)}
            <RibbonItem $w={46}>
              <MoreBox><MoreTool /></MoreBox>
              <ItemLabel>更多</ItemLabel>
              <Caret $mt={4} />
            </RibbonItem>
          </GroupBody>
          <GroupFoot $pr={18}>工序<FootCaret $r={8} /></GroupFoot>
        </Group>
        <Divider />
        <Group $w={105}>
          <GroupBody>
            <DisplayGrid>
              <ClipCell><Tree c="#3050c0" /></ClipCell><Caret />
              <ClipCell><Views /></ClipCell><Caret />
              <ClipCell><Tree off /></ClipCell>
              <ToggleCell><CutParams w={24} h={24} /></ToggleCell><span />
              <SCurve /><span />
              <Flange />
              <ToggleCell><NonCut w={24} h={24} /></ToggleCell><span />
              <CircleDot /><span />
              <Segment />
            </DisplayGrid>
          </GroupBody>
          <GroupFoot>显示</GroupFoot>
        </Group>
        <Group $w={67} $ml={328}>
          <GroupBody $pl={18}>
            <RibbonItem $w={37}>
              <MoreBox><MoreSpin /></MoreBox>
              <ItemLabel>更多</ItemLabel>
              <Caret $mt={4} />
            </RibbonItem>
          </GroupBody>
          <GroupFoot><FootCaret $r={16} /></GroupFoot>
        </Group>
      </Ribbon>

      <Toolbar>
        <ToolCell $w={13}><ToolText>M)</ToolText></ToolCell>
        <ToolCell $w={10}><Caret /></ToolCell>
        <ToolCell $w={8}><ToolSep /></ToolCell>
        <ToolCell $w={22} $ml={7} $on><Tree /></ToolCell>
        <ToolCell $w={24}><Asm /></ToolCell>
        <ToolCell $w={26}><Tree c="#c04a6a" /></ToolCell>
        <ToolCell $w={24}><Tree c="#d8b050" /></ToolCell>
        <ToolCell $w={14}><ToolSep /></ToolCell>
        <ToolCell $w={28}><Asm off /></ToolCell>
        <ToolCell $w={20}><Tree off /></ToolCell>
        <ToolCell $w={18}><ToolSep /></ToolCell>
        <ToolSelect $w={133} $ml={4}><span /><GreyCaret /></ToolSelect>
        <ToolSelect $w={139} $ml={8}>整个装配<GreyCaret /></ToolSelect>
        <ToolCell $w={5} />
        {toolCells.map(([w, I], i) => (
          <ToolCell key={i} $w={w}>
            {I === 'caret' ? <Caret /> : I === 'sep' ? <ToolSep /> : <I />}
          </ToolCell>
        ))}
      </Toolbar>

      <Main>
        <Work>
          <Tabs>
            <Tab $w={112} $gap={5} $pl={0}>CB16转子.prt<DocIcon /></Tab>
            <Tab $w={105} $gap={6} $pl={5} $active>
              <Ico w={16} h={19}>
                <Cutter x={4} y={0} w={5} h={14} c="#4a4fb0" />
                <path d="M9 4 15 2M9 7 14 5M9 10 13 8" stroke="#dff" />
                <path d="M6 14l1 2 2 0-1 1.500 .5 1.500-2-1-2 1 .5-1.500-1-1.500 2 0Z" fill="#f1e04c" />
              </Ico>
              111.prt<DocIcon c="#fff" /><TabClose>✕</TabClose>
            </Tab>
          </Tabs>
          <Viewport><Scene /></Viewport>
        </Work>
        <Strip>
          <StripCell $h={33}><StripTool /></StripCell>
          <StripCell $h={33}><StripBlock /></StripCell>
          <StripCell $h={33}><StripGen /></StripCell>
          <StripCell $h={33}><StripGrid /></StripCell>
          <StripCell $h={33}><StripWaves /></StripCell>
          <StripSep $mt={6} />
          <StripCell $h={30} $mt={10}><StripRuler /></StripCell>
          <StripCell $h={28}><StripWedge /></StripCell>
          <StripSep $mt={5} />
        </Strip>
        <ListPane>
          <ListHead />
          {listRows.map(i => (
            <ListRow key={i} $sel={i === 3} $alt={i % 2 === 1}>
              {markedRows.includes(i) && <ListMark />}
            </ListRow>
          ))}
        </ListPane>
      </Main>

      <Dialog>
        <Section>
          <Row>
            <Label $lh={25}>几何体</Label>
            <Controls>
              <PanelSelect $w={117}><SelectText>111</SelectText><Caret /></PanelSelect>
              <IconButton><GeomNew /></IconButton>
              <IconButton><Wrench /></IconButton>
            </Controls>
          </Row>
          <Row>
            <Label $lh={37}>指定部件</Label>
            <Controls>
              <IconButton $off><Block /></IconButton>
              <IconButton><Flash /></IconButton>
            </Controls>
          </Row>
          <Row>
            <Label $lh={37}>指定面边界</Label>
            <Controls>
              <IconButton><WireBox /></IconButton>
              <IconButton><Flash /></IconButton>
            </Controls>
          </Row>
          <Row>
            <Label $lh={37}>指定检查体</Label>
            <Controls>
              <IconButton><RedBlock /></IconButton>
              <IconButton $off><Flash on={false} /></IconButton>
            </Controls>
          </Row>
          <Row>
            <Label $lh={37}>指定检查边界</Label>
            <Controls>
              <IconButton><Boat /></IconButton>
              <IconButton $off><Flash on={false} /></IconButton>
            </Controls>
          </Row>
        </Section>

        <Section>
          <SectionHead>工具<ChevronUp /></SectionHead>
          <Row>
            <Label $lh={25}>刀具</Label>
            <Controls>
              <PanelSelect $w={117}><SelectText>HJ-8 (铣刀-5 参数)</SelectText><Caret /></PanelSelect>
              <IconButton><ToolNew /></IconButton>
              <IconButton><ToolWrench /></IconButton>
            </Controls>
          </Row>
          <SubBar>输出<Chevron s={11} /></SubBar>
          <SubBar>换刀设置<Chevron s={11} /></SubBar>
        </Section>

        <Section $collapsed>
          <SectionHead $collapsed>刀轴<Chevron /></SectionHead>
        </Section>

        <Section>
          <SectionHead>刀轨设置<ChevronUp /></SectionHead>
          <Row>
            <Label $lh={25}>方法</Label>
            <Controls>
              <PanelSelect $w={117}><SelectText>METHOD</SelectText><Caret /></PanelSelect>
              <IconButton><Waves /></IconButton>
              <IconButton $off><Wrench a="#cfc8b8" b="#bdb6a6" /></IconButton>
            </Controls>
          </Row>
          <Row $h={26}>
            <Label $lh={26}>切削模式</Label>
            <PanelSelect $w={141} $h={26}><ProfileMode /><SelectText>轮廓</SelectText><Caret /></PanelSelect>
          </Row>
          <Row $h={25}>
            <Label $lh={25}>步距</Label>
            <PanelSelect $w={141}><SelectText>% 刀具平直</SelectText><Caret /></PanelSelect>
          </Row>
          <Row $h={23}>
            <Label $lh={23}>平面直径百分比</Label>
            <ValueBox><ValueText $sel $wide>75.00000</ValueText></ValueBox>
          </Row>
          <Row $h={23}>
            <Label $lh={23}>毛坯距离</Label>
            <ValueBox><ValueText $cut>5.10000</ValueText></ValueBox>
          </Row>
          <Row $h={23}>
            <Label $lh={23}>每刀切削深度</Label>
            <ValueBox><ValueText $cut>0.40000</ValueText></ValueBox>
          </Row>
          <Row $h={23}>
            <Label $lh={23}>最终底面余量</Label>
            <ValueBox><ValueText $cut>0.05000</ValueText></ValueBox>
          </Row>
          <Row $h={23}>
            <Label $lh={23}>附加刀路</Label>
            <ValueBox><ValueText>0</ValueText></ValueBox>
          </Row>
          <Row>
            <Label>切削参数</Label>
            <IconButton><CutParams /></IconButton>
          </Row>
          <Row>
            <Label>非切削移动</Label>
            <IconButton><NonCut /></IconButton>
          </Row>
          <Row>
            <Label>进给率和速度</Label>
            <IconButton><Feeds /></IconButton>
          </Row>
        </Section>

        <Section $collapsed><SectionHead $collapsed>机床控制<Chevron /></SectionHead></Section>
        <Section $collapsed><SectionHead $collapsed>程序<Chevron /></SectionHead></Section>
        <Section $collapsed><SectionHead $collapsed>描述<Chevron /></SectionHead></Section>
        <Section $collapsed><SectionHead $collapsed>选项<Chevron o={0.5} /></SectionHead></Section>
        <Section>
          <SectionHead>操作<ChevronUp /></SectionHead>
          <ActionRow>
            <IconButton><GenPath /></IconButton>
            <IconButton><Squiggle over={<path d="M14 18a5 5 0 1 1 8 4" stroke="#222" strokeWidth="1.500" />} /></IconButton>
            <IconButton><VerifyPath /></IconButton>
            <IconButton><Squiggle over={<path d="M13 10h9l4 4v12H13Z" fill="#e8eef8" stroke="#667" />} /></IconButton>
          </ActionRow>
        </Section>
      </Dialog>

      <Overlay width="1651" height="846" viewBox="0 0 1651 846" fill="none">
        <path d="M1422 746 1471 424" stroke="#ee1c25" strokeWidth="3.500" />
        <path d="M1474 411 1462 428 1481 431Z" fill="#ee1c25" />
        <g opacity=".85">
          <path d="M1404 751 1440 771V813L1404 833 1369 813V771Z" fill="#a5dcf8" />
          <path d="M1404 751 1440 771 1440 800C1432 778 1418 770 1404 770 1398 770 1390 771 1385 762Z" fill="#c6e9fb" />
          <path d="M1369 771C1372 790 1378 806 1396 814L1380 826 1369 813Z" fill="#8fd3f5" />
          <path d="M1440 813 1404 833 1392 826C1412 826 1428 815 1440 800Z" fill="#7cc6ee" />
          <path d="M1385 762C1376 770 1370 785 1372 805M1440 785C1436 772 1420 762 1404 760M1378 820C1392 830 1420 826 1438 804" stroke="#e8f6fd" strokeWidth="1.200" />
          <path d="M1404 776 1420 785 1404 794 1388 785Z" fill="#d6effb" />
          <path d="M1388 785 1404 794V812L1388 803Z" fill="#a9def8" />
          <path d="M1420 785 1404 794V812L1420 803Z" fill="#7ec8ee" />
        </g>
      </Overlay>
    </Page>
  );
}
